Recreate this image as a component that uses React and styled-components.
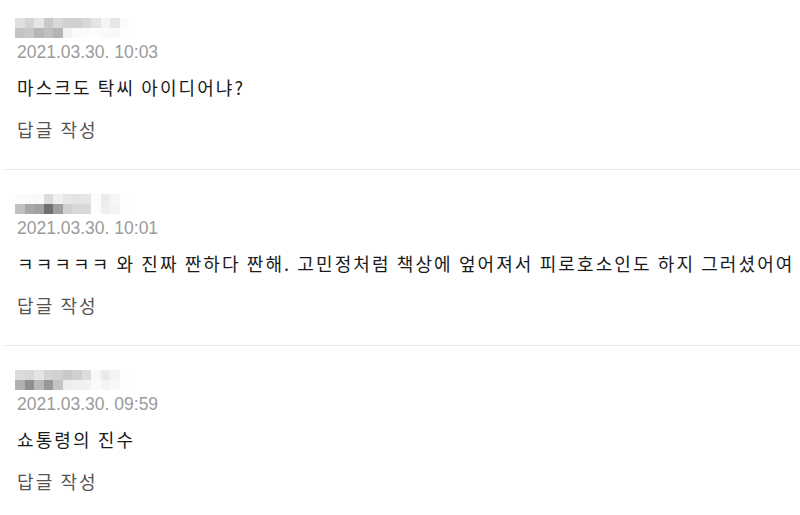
import styled, { createGlobalStyle } from 'styled-components'

const comments = [
  {
    date: '2021.03.30. 10:03',
    text: '마스크도 탁씨 아이디어냐?',
    mosaic: [
      ['#e0e0e0', '#d4d4d4', '#e6e6e6', '#c8c8c8', '#d8d8d8', '#d0d0d0', '#d0d0d0', '#d8d8d8', '#e4e4e4', '#f4f4f4', '#e6e6e6', '#fafafa'],
      ['#c4c4c4', '#c8c8c8', '#b6b6b6', '#c0c0c0', '#b4b4b4', '#f2f2f2', '#fafafa', '#fcfcfc', '#fdfdfd', '#fafafa', '#f8f8f8', '#fdfdfd'],
    ],
  },
  {
    date: '2021.03.30. 10:01',
    text: 'ㅋㅋㅋㅋㅋ 와 진짜 짠하다 짠해. 고민정처럼 책상에 엎어져서 피로호소인도 하지 그러셨어여',
    mosaic: [
      ['#fbfbfb', '#fafafa', '#f8f8f8', '#dcdcdc', '#f0f0f0', '#e6e6e6', '#e4e4e4', '#e6e6e6', '#fcfcfc', '#ececec', '#f6f6f6', '#fdfdfd'],
      ['#c0c0c0', '#a8a8a8', '#a0a0a0', '#707070', '#a0a0a0', '#d0d0d0', '#d8d8d8', '#d8d8d8', '#fdfdfd', '#eeeeee', '#f4f4f4', '#fdfdfd'],
    ],
  },
  {
    date: '2021.03.30. 09:59',
    text: '쇼통령의 진수',
    mosaic: [
      ['#dcdcdc', '#d8d8d8', '#e4e4e4', '#d4d4d4', '#d0d0d0', '#c8c8c8', '#d0d0d0', '#dcdcdc', '#f8f8f8', '#eaeaea', '#f4f4f4', '#fdfdfd'],
      ['#b0b0b0', '#909090', '#b8b8b8', '#989898', '#c4c4c4', '#eeeeee', '#f0f0f0', '#f2f2f2', '#fafafa', '#f4f4f4', '#f8f8f8', '#fdfdfd'],
    ],
  },
]

export default function App() {
  return (
    <>
      <GlobalStyle />
      <List>
        {comments.map((c) => (
          <Item key={c.date}>
            <Mosaic>
              {c.mosaic.flat().map((color, i) => (
                <Cell key={i} color={color} />
              ))}
            </Mosaic>
            <Date>{c.date}</Date>
            <Text>{c.text}</Text>
            <Reply>답글 작성</Reply>
          </Item>
        ))}
      </List>
    </>
  )
}

const GlobalStyle = createGlobalStyle`
  body {
    margin: 0;
    background: #fff;
    font-family: 'Liberation Sans', 'Noto Sans CJK KR', sans-serif;
  }
`

const List = styled.ul`
  list-style: none;
  margin: 0;
  padding: 0 0 0 3px;
  overflow: hidden;
`

const Item = styled.li`
  display: flex;
  flex-direction: column;
  align-items: flex-start;
  padding: 24px 0 28px 14px;
  border-top: 1px solid #ececec;

  &:first-child {
    padding-top: 18px;
    border-top: none;
  }
`

const Mosaic = styled.div`
  display: grid;
  grid-template-columns: repeat(12, 9.5px);
  grid-auto-rows: 10px;
  margin: 0 0 4px -2px;
`

const Cell = styled.span`
  background: ${(props) => props.color};
`

const Date = styled.div`
  font-family: 'Liberation Sans', sans-serif;
  font-size: 17.5px;
  line-height: 20px;
  color: #9a9a9a;
`

const Text = styled.div`
  margin-top: 13px;
  font-family: 'Noto Sans CJK KR', sans-serif;
  font-size: 18px;
  letter-spacing: 2.1px;
  line-height: 24px;
  color: #1a1a1a;
  white-space: nowrap;
`

const Reply = styled(Text)`
  margin-top: 18px;
  color: #555;
`
